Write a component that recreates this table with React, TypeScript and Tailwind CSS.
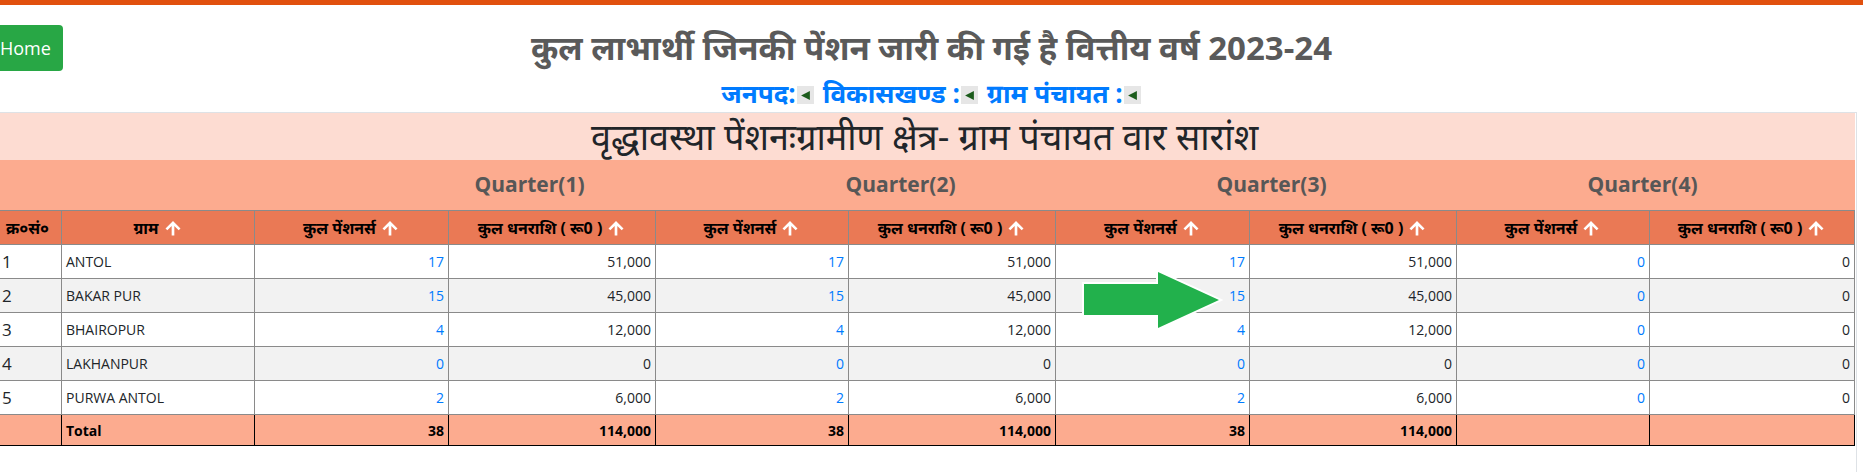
import React from "react";

const FONT = "font-['Segoe_UI','Open_Sans','Noto_Sans_Devanagari',sans-serif]";

type Quarter = [number, string];
type Row = { n: number; name: string; q: Quarter[] };

const rows: Row[] = [
  { n: 1, name: "ANTOL", q: [[17, "51,000"], [17, "51,000"], [17, "51,000"], [0, "0"]] },
  { n: 2, name: "BAKAR PUR", q: [[15, "45,000"], [15, "45,000"], [15, "45,000"], [0, "0"]] },
  { n: 3, name: "BHAIROPUR", q: [[4, "12,000"], [4, "12,000"], [4, "12,000"], [0, "0"]] },
  { n: 4, name: "LAKHANPUR", q: [[0, "0"], [0, "0"], [0, "0"], [0, "0"]] },
  { n: 5, name: "PURWA ANTOL", q: [[2, "6,000"], [2, "6,000"], [2, "6,000"], [0, "0"]] },
];

const COLS =
  "grid grid-cols-[68px_193px_194px_207px_193px_207px_194px_207px_193px_205px]";

function UpArrow() {
  return (
    <svg viewBox="0 0 24 24" className="w-[20px] h-[20px] ml-1 inline-block" fill="#fff">
      <path d="M3 12.5l2.2 2.2L10.4 9.5V21h3.2V9.5l5.2 5.2 2.2-2.2L12 3.5z" />
    </svg>
  );
}

function LeftMark() {
  return (
    <span className="inline-flex items-center justify-center w-[17px] h-[18px] bg-[#e6e6e6] mx-[1px] mt-[4px]">
      <svg viewBox="0 0 10 10" className="w-[11px] h-[11px]">
        <polygon points="1,5 9,1 9,9" fill="#1c5c1c" />
      </svg>
    </span>
  );
}

function HeadCell({ label, arrow = true }: { label: string; arrow?: boolean }) {
  return (
    <div className="h-[34px] flex items-center justify-center border-r border-b border-[#8a8a8a] text-[16px] font-bold text-black">
      <span>{label}</span>
      {arrow && <UpArrow />}
    </div>
  );
}

export default function App() {
  return (
    <div className={`relative w-[1863px] h-[472px] bg-white overflow-hidden text-[#212529] ${FONT}`}>
      <div className="h-[5px] bg-[#e1500e]" />

      <div className="grid grid-cols-[1fr_auto_1fr] items-start pt-[20px]">
        <div>
          <button className="-ml-[12px] h-[46px] px-3 rounded bg-[#28a745] text-white text-[18px]">
            Home
          </button>
        </div>
        <h3 className="mt-[3px] text-[33px] leading-[40px] font-bold text-[#5a5a5a]">
          कुल लाभार्थी जिनकी पेंशन जारी की गई है वित्तीय वर्ष 2023-24
        </h3>
        <div />
      </div>

      <div className="mt-[8px] h-[28px] flex items-center justify-center text-[26px] leading-[28px] font-bold text-[#007bff]">
        <span>जनपद:</span>
        <LeftMark />
        <span className="ml-[8px]">विकासखण्ड :</span>
        <LeftMark />
        <span className="ml-[8px]">ग्राम पंचायत :</span>
        <LeftMark />
      </div>

      <div className="mt-[5px] w-[1857px] h-[400px] border-t border-r border-[#dee2e6]">
        <div className="-ml-[6px] w-[1861px]">
          <div className="h-[47px] bg-[#fddcd2] flex items-center justify-center text-[36px] text-[#212529]">
            वृद्धावस्था पेंशनःग्रामीण क्षेत्र- ग्राम पंचायत वार सारांश
          </div>

          <div className="h-[50px] bg-[#fcab8f] grid grid-cols-[350px_371px_371px_371px_371px_27px] items-center text-[21px] font-bold text-[#575757]">
            <div />
            <div className="text-center">Quarter(1)</div>
            <div className="text-center">Quarter(2)</div>
            <div className="text-center">Quarter(3)</div>
            <div className="text-center">Quarter(4)</div>
            <div />
          </div>

          <div className={`${COLS} bg-[#ea7955] border-t border-[#8a8a8a]`}>
            <HeadCell label="क्र०सं०" arrow={false} />
            <HeadCell label="ग्राम" />
            {[0, 1, 2, 3].map((i) => (
              <React.Fragment key={i}>
                <HeadCell label="कुल पेंशनर्स" />
                <HeadCell label="कुल धनराशि ( रू0 )" />
              </React.Fragment>
            ))}
          </div>

          {rows.map((r) => (
            <div
              key={r.n}
              className={`${COLS} ${r.n % 2 === 0 ? "bg-[#f2f2f2]" : "bg-white"} text-[14px]`}
            >
              <div className="h-[34px] flex items-center pl-2 text-[17px] border-r border-b border-[#8a8a8a]">
                {r.n}
              </div>
              <div className="h-[34px] flex items-center pl-1 border-r border-b border-[#8a8a8a]">
                {r.name}
              </div>
              {r.q.map(([count, amt], i) => (
                <React.Fragment key={i}>
                  <div className="h-[34px] flex items-center justify-end pr-1 text-[#007bff] border-r border-b border-[#8a8a8a]">
                    {count}
                  </div>
                  <div className="h-[34px] flex items-center justify-end pr-1 border-r border-b border-[#8a8a8a]">
                    {amt}
                  </div>
                </React.Fragment>
              ))}
            </div>
          ))}

          <div className={`${COLS} bg-[#fcab8f] text-[14px] font-bold text-black border-b border-black`}>
            <div className="h-[30px] border-r border-black" />
            <div className="h-[30px] flex items-center pl-1 border-r border-black">Total</div>
            {["38", "114,000", "38", "114,000", "38", "114,000", "", ""].map((v, i) => (
              <div key={i} className="h-[30px] flex items-center justify-end pr-1 border-r border-black">
                {v}
              </div>
            ))}
          </div>
        </div>
      </div>

      <svg
        className="absolute left-[1081px] top-[269px]"
        width="142"
        height="62"
        viewBox="0 0 142 62"
      >
        <polygon
          points="3,15 77,15 77,3 138,31 77,59 77,46 3,46"
          fill="#22b14c"
          stroke="#fff"
          strokeWidth="4"
          strokeLinejoin="miter"
          paintOrder="stroke"
        />
      </svg>
    </div>
  );
}
